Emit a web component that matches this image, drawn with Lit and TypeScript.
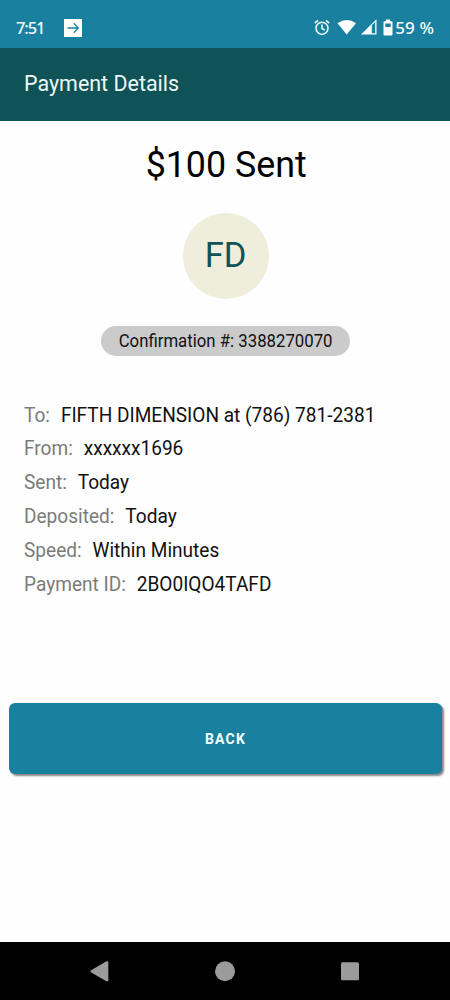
import { LitElement, html, css } from "lit";
import { customElement } from "lit/decorators.js";

const rows: [string, string][] = [
  ["To:", "FIFTH DIMENSION at (786) 781-2381"],
  ["From:", "xxxxxx1696"],
  ["Sent:", "Today"],
  ["Deposited:", "Today"],
  ["Speed:", "Within Minutes"],
  ["Payment ID:", "2BO0IQO4TAFD"],
];

@customElement("status-bar")
class StatusBar extends LitElement {
  static styles = css`
    :host {
      display: flex;
      align-items: center;
      height: 48px;
      box-sizing: border-box;
      padding: 7px 16px 0 16px;
      background: #1a809f;
      color: #f3fdff;
      font: 500 17px/24px "Noto Sans", sans-serif;
    }
    .time { width: 47px; font-size: 16.500px; letter-spacing: -1.100px; }
    .icons { display: flex; align-items: center; margin-left: auto; }
    .battery { letter-spacing: 0.1px; }
    svg { display: block; }
  `;
  render() {
    return html`
      <span class="time">7:51</span>
      <svg width="20" height="18" viewBox="0 0 20 18">
        <path d="M1 0H19V18H1Z" fill="#fff" />
        <path d="M4.5 9H15M10.8 4.3L15.2 9L10.8 13.7" fill="none" stroke="#1a809f" stroke-width="1.3" />
      </svg>
      <span class="icons">
        <svg width="81" height="18" viewBox="0 0 81 18">
          <g fill="none" stroke="#f3fdff" stroke-width="1.5">
            <circle cx="8" cy="9.2" r="6" />
            <path d="M8 5.500V9.500L10.800 11.200M.8 4.100L4 1.400M15.200 4.100L12 1.400" />
          </g>
          <path d="M23.500 4.200Q32.700 -2.400 42 4.200L32.700 15.500Z" fill="#fff" />
          <path d="M47 15.500L62.500 .3V15.500Z" fill="#fff" />
          <path d="M57.800 6.300L61.200 3V14.200H57.800Z" fill="#1a809f" />
          <path d="M72 .5h4v1.800h1.500q1 0 1 1V15.500q0 1-1 1H70.500q-1 0-1-1V3.300q0-1 1-1H72z" fill="#fff" />
          <path d="M71.300 4.500h5.400v3.500h-5.400z" fill="#1a809f" />
        </svg>
        <span class="battery">59 %</span>
      </span>
    `;
  }
}

@customElement("nav-bar")
class NavBar extends LitElement {
  static styles = css`
    :host {
      display: flex;
      justify-content: space-between;
      align-items: center;
      box-sizing: border-box;
      height: 58px;
      padding: 0 89px;
      background: #000;
    }
    svg { display: block; fill: #9b9b9b; }
  `;
  render() {
    return html`
      <svg width="22" height="22" viewBox="0 0 22 22"><path d="M2.200 10.200L17 1.500Q19.300 .5 19.300 2.300V20.300Q19.300 22 17 21.100L2.200 12.400Q.4 11.300 2.200 10.200Z" /></svg>
      <svg width="22" height="22" viewBox="0 0 22 22"><circle cx="11" cy="11.300" r="10" /></svg>
      <svg width="22" height="22" viewBox="0 0 22 22"><rect x="2" y="2.300" width="18" height="18" rx="1.500" /></svg>
    `;
  }
}

@customElement("app-root")
class AppRoot extends LitElement {
  static styles = css`
    :host {
      display: flex;
      flex-direction: column;
      width: 450px;
      height: 1000px;
      overflow: hidden;
      background: #fefefe;
      color: #111;
      font-family: Roboto, sans-serif;
    }
    .header {
      height: 73px;
      box-sizing: border-box;
      padding: 0 24px 2px;
      display: flex;
      align-items: center;
      background: #0f5257;
      color: #edfafa;
      font-size: 22px;
    }
    .title { transform: scaleX(0.975); transform-origin: left; }
    .main { flex: 1; display: flex; flex-direction: column; align-items: center; }
    .amount { margin: 22px 0 0 2px; font-size: 36.500px; line-height: 44px; font-weight: 400; color: #000; transform: scaleX(0.98); }
    .avatar {
      width: 86px;
      height: 86px;
      margin: 26px 0 0 1px;
      border-radius: 50%;
      background: #efeedc;
      color: #0f5257;
      text-align: center;
      font-size: 34.500px;
      line-height: 84px;
    }
    .confirmation {
      display: flex;
      justify-content: center;
      box-sizing: border-box;
      width: 249px;
      height: 30px;
      margin-top: 27px;
      padding-left: 1px;
      border-radius: 15px;
      background: #cbcbcb;
      font-size: 17.500px;
      line-height: 30px;
    }
    .number { white-space: nowrap; transform: scaleX(0.958); }
    .details { align-self: stretch; margin: 41.600px 24px 0; font-size: 20px; }
    .row {
      display: flex;
      align-items: center;
      height: 33.870px;
      gap: 11.500px;
      white-space: nowrap;
      transform: scaleX(0.953);
      transform-origin: left;
    }
    .label { color: #7b7b7b; }
    .back {
      align-self: stretch;
      height: 71px;
      margin: 102.180px 8px 0 9px;
      padding: 2px 0 0;
      border: 0;
      border-radius: 6px;
      background: #1a809f;
      box-shadow: 2px 2px 2px #858585;
      color: #f3fdff;
      font: 700 14px Roboto, sans-serif;
      letter-spacing: 1.200px;
    }
  `;
  render() {
    return html`
      <status-bar></status-bar>
      <header class="header"><span class="title">Payment Details</span></header>
      <main class="main">
        <h1 class="amount">$100 Sent</h1>
        <div class="avatar">FD</div>
        <div class="confirmation"><span class="number">Confirmation #: 3388270070</span></div>
        <div class="details">
          ${rows.map(([label, value]) => html`<div class="row"><span class="label">${label}</span><span class="value">${value}</span></div>`)}
        </div>
        <button class="back">BACK</button>
      </main>
      <nav-bar></nav-bar>
    `;
  }
}
